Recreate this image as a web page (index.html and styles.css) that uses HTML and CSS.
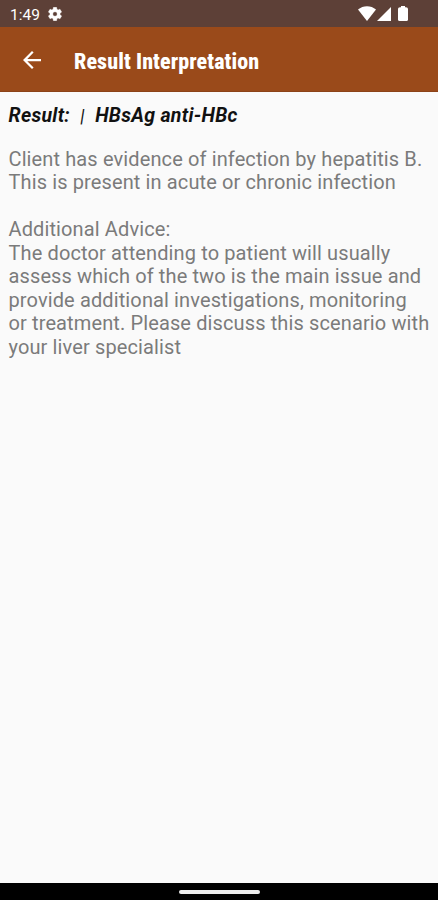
FILE: index.html
```html
<!DOCTYPE html>
<html lang="en">
<head>
    <meta charset="UTF-8">
    <meta name="viewport" content="width=device-width, initial-scale=1.0">
    <title>Result Interpretation</title>
    <link rel="stylesheet" href="styles.css">
</head>
<body>
    <div class="status-bar">
        <span class="clock">1:49</span>
        <svg class="gear" viewBox="2 2 20 20"><path d="M19.14 12.94c.04-.3.06-.61.06-.94s-.02-.64-.07-.94l2.03-1.58c.18-.14.23-.41.12-.61l-1.92-3.32c-.12-.22-.37-.29-.59-.22l-2.39.96c-.5-.38-1.03-.7-1.62-.94l-.36-2.54c-.04-.24-.24-.41-.48-.41h-3.84c-.24 0-.43.17-.47.41l-.36 2.54c-.59.24-1.13.57-1.62.94l-2.39-.96c-.22-.08-.47 0-.59.22L2.74 8.87c-.12.21-.08.47.12.61l2.03 1.58c-.05.3-.09.63-.09.94s.02.64.07.94l-2.03 1.58c-.18.14-.23.41-.12.61l1.92 3.32c.12.22.37.29.59.22l2.39-.96c.5.38 1.03.7 1.62.94l.36 2.54c.05.24.24.41.48.41h3.84c.24 0 .44-.17.47-.41l.36-2.54c.59-.24 1.13-.56 1.62-.94l2.39.96c.22.08.47 0 .59-.22l1.92-3.32c.12-.22.07-.47-.12-.61l-2.01-1.58zM12 15.2A3.2 3.2 0 1 1 12 8.8a3.2 3.2 0 0 1 0 6.4z"/></svg>
        <div class="indicators">
            <svg class="wifi" viewBox="0 0 18 15"><path d="M0 3.5C5 -1 13 -1 18 3.5L9 15z"/></svg>
            <svg class="signal" viewBox="0 0 14 14"><path d="M14 0v14H0z"/></svg>
            <svg class="battery" viewBox="0 0 10 15"><path d="M3 0h4v1.2h1c1.2 0 2 .8 2 2v10.6c0 .7-.5 1.2-1.2 1.2H1.2C.5 15 0 14.5 0 13.8V3.2c0-1.2.8-2 2-2h1z"/></svg>
        </div>
    </div>

    <header class="app-bar">
        <svg class="back" viewBox="4 4 16 16"><path d="M20 11H7.83l5.59-5.59L12 4l-8 8 8 8 1.41-1.41L7.83 13H20v-2z"/></svg>
        <h1 class="title">Result Interpretation</h1>
    </header>

    <main class="content">
        <h2 class="result">Result: &nbsp;<span class="divider">|</span>&nbsp; HBsAg anti-HBc</h2>
        <p class="text">Client has evidence of infection by hepatitis B.<br>
            This is present in acute or chronic infection</p>
        <p class="text">Additional Advice:<br>
            The doctor attending to patient will usually<br>
            assess which of the two is the main issue and<br>
            provide additional investigations, monitoring<br>
            or treatment. Please discuss this scenario with<br>
            your liver specialist</p>
    </main>

    <div class="nav-bar">
        <div class="handle"></div>
    </div>
</body>
</html>
```
FILE: styles.css
```css
body {
    display: flex;
    flex-direction: column;
    height: 100vh;
    margin: 0;
    font-family: Roboto, "Liberation Sans", sans-serif;
    background-color: #fafafa;
}

svg {
    display: block;
    fill: #fff;
}

.status-bar {
    display: flex;
    align-items: center;
    height: 27px;
    padding: 0 30px 0 10px;
    box-sizing: border-box;
    background-color: #5d4037;
    color: #fff;
}

.clock {
    width: 30px;
    margin-right: 8px;
    padding-top: 2px;
    font-size: 15.5px;
    white-space: nowrap;
}

.gear {
    width: 14px;
    height: 14px;
    margin-top: 1px;
    stroke: #fff;
    stroke-width: .6px;
}

.indicators {
    display: flex;
    align-items: flex-end;
    margin-left: auto;
}

.wifi {
    width: 18px;
    height: 15px;
    margin-right: 1px;
}

.signal {
    width: 14px;
    height: 14px;
    margin-right: 7px;
}

.battery {
    width: 10px;
    height: 15px;
}

.app-bar {
    display: flex;
    align-items: center;
    height: 65px;
    padding: 3px 23px 0;
    box-sizing: border-box;
    background-color: #9a4a1a;
    border-bottom: 1px solid #8c4218;
    color: #fff;
}

.back {
    width: 18px;
    height: 18px;
    margin: 0 33px 1px 0;
}

.title {
    margin: 0;
    padding-top: 1px;
    font-size: 22px;
    font-weight: 800;
    font-stretch: 75%;
    letter-spacing: .1px;
    white-space: nowrap;
}

.content {
    flex: 1;
    padding: 12px 0 0 8.5px;
}

.result {
    margin: 0 0 20px;
    font-size: 19.5px;
    font-style: italic;
    font-weight: 700;
    line-height: 23.5px;
    letter-spacing: .3px;
    color: #111;
}

.divider {
    font-size: 18.5px;
    font-weight: 400;
    line-height: 1;
}

.text {
    margin: 0 0 23.5px;
    font-size: 20px;
    line-height: 23.5px;
    letter-spacing: .12px;
    color: #7b7b7b;
    white-space: nowrap;
}

/* gesture navigation */
.nav-bar {
    display: flex;
    justify-content: center;
    align-items: center;
    height: 17px;
    background-color: #000;
}

.handle {
    width: 81px;
    height: 4px;
    border-radius: 2px;
    background-color: #eee;
}
```
